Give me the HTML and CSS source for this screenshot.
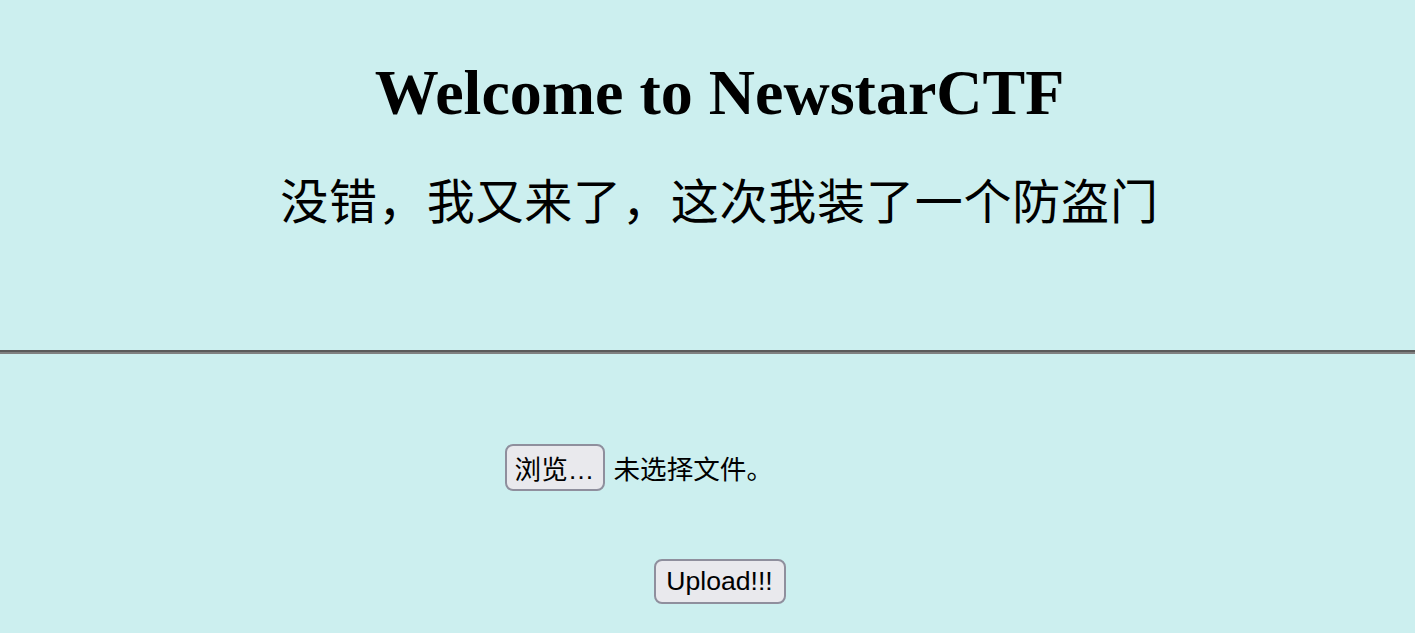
FILE: index.html
```html
<!DOCTYPE html>
<html lang="zh-CN">
<head>
<meta charset="utf-8">
<title>NewstarCTF</title>
<link rel="stylesheet" href="styles.css">
</head>
<body>
<header class="header">
  <h1 class="title">Welcome to NewstarCTF</h1>
  <h2 class="subtitle">没错，我又来了，这次我装了一个防盗门</h2>
</header>
<hr class="rule">
<form class="upload-form">
  <div class="file-row">
    <div class="file-input">
      <button type="button" class="btn btn-browse">浏览…</button>
      <span class="file-name">未选择文件。</span>
    </div>
  </div>
  <div class="submit-row">
    <button type="button" class="btn btn-upload">Upload!!!</button>
  </div>
</form>
</body>
</html>
```

FILE: styles.css
```css
html, body {
  margin: 0;
  padding: 0;
}
body {
  background: #ccefef;
  color: #000;
  font-family: "Liberation Serif", "Noto Sans CJK SC", serif;
  overflow: hidden;
}
.header {
  padding: 56px 0 0 24px;
  text-align: center;
}
.title {
  margin: 0;
  font-family: "Liberation Serif", serif;
  font-size: 64px;
  font-weight: bold;
  line-height: 74px;
}
.subtitle {
  margin: 43px 0 0;
  font-family: "Liberation Serif", "Noto Sans CJK SC", serif;
  font-size: 48px;
  font-weight: normal;
  line-height: 60px;
  letter-spacing: 0.8px;
}
.rule {
  margin: 117px 0 0;
  height: 0;
  border: 0;
  border-top: 2px solid #5a5a5a;
  border-bottom: 2px solid #808080;
}
.upload-form {
  padding-left: 24px;
}
.file-row {
  margin-top: 90px;
  display: flex;
  justify-content: center;
}
.file-input {
  width: 430px;
  display: flex;
  align-items: center;
  gap: 9px;
}
.btn {
  box-sizing: border-box;
  font-family: "Liberation Sans", "Noto Sans CJK SC", sans-serif;
  font-size: 26.6px;
  color: #000;
  background: #e9e9ed;
  border: 2px solid #8f8f9d;
  border-radius: 8px;
  padding: 0;
  display: flex;
  align-items: center;
  justify-content: center;
}
.btn-browse {
  width: 100px;
  height: 47px;
}
.file-name {
  font-family: "Liberation Sans", "Noto Sans CJK SC", sans-serif;
  font-size: 26.6px;
}
.submit-row {
  margin-top: 68px;
  display: flex;
  justify-content: center;
}
.btn-upload {
  width: 132px;
  height: 45px;
}
```
